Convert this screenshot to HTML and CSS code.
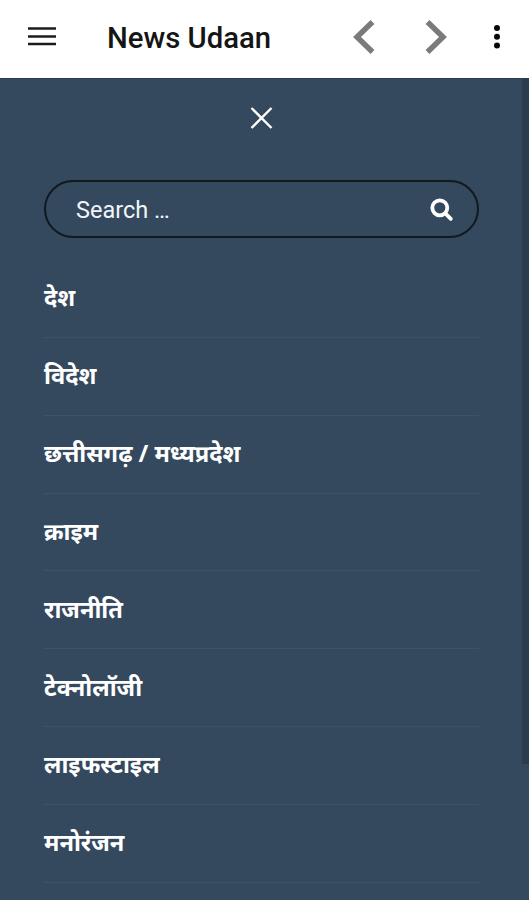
FILE: index.html
```html
<!DOCTYPE html>
<html lang="hi">
<head>
<meta charset="utf-8">
<title>News Udaan</title>
<link rel="stylesheet" href="styles.css">
</head>
<body>
<header class="bar">
  <svg class="burger" width="28" height="20" viewBox="0 0 28 20"><path d="M0 1.500h28M0 9.500h28M0 17h28"/></svg>
  <h1 class="title">News Udaan</h1>
  <svg class="chev back" width="22" height="34" viewBox="0 0 22 34"><path d="M19.500 2L4 17l15.500 15"/></svg>
  <svg class="chev next" width="22" height="34" viewBox="0 0 22 34"><path d="M2.500 2L18 17 2.500 32"/></svg>
  <svg class="dots" width="6" height="24" viewBox="0 0 6 24"><circle cx="3" cy="3" r="3"/><circle cx="3" cy="11.800" r="3"/><circle cx="3" cy="20.500" r="3"/></svg>
</header>
<main class="drawer">
  <div class="panel">
    <svg class="close" width="24" height="24" viewBox="0 0 24 24"><path d="M1.500 2l20 20M21.500 2l-20 20"/></svg>
    <div class="search">
      <span>Search …</span>
      <svg class="lens" width="24" height="24" viewBox="0 0 24 24"><circle cx="9.800" cy="9.800" r="7.500"/><path d="M15.300 15.300l5.500 5.500" stroke-linecap="round"/></svg>
    </div>
    <nav class="menu">
      <a>देश</a>
      <a>विदेश</a>
      <a>छत्तीसगढ़ / मध्यप्रदेश</a>
      <a>क्राइम</a>
      <a>राजनीति</a>
      <a>टेक्नोलॉजी</a>
      <a>लाइफस्टाइल</a>
      <a>मनोरंजन</a>
    </nav>
  </div>
  <div class="track"><div class="thumb"></div></div>
</main>
</body>
</html>
```
FILE: styles.css
```css
* { box-sizing: border-box; }
body { margin: 0; height: 900px; overflow: hidden; background: #34495e; font-family: Roboto, "Noto Sans", sans-serif; }
svg { display: block; flex: none; fill: none; }
.bar { height: 78px; padding: 0 29px 4px 28px; display: flex; align-items: center; background: #fff; }
.burger { stroke: #1c1c1c; stroke-width: 2.5; }
.title { margin: 2px 0 0 51px; width: 246px; font-size: 29.300px; line-height: 34px; font-weight: 500; color: #151515; white-space: nowrap; }
.chev { stroke: #7b7b7b; stroke-width: 5.5; }
.next { margin-left: 50px; }
.dots { margin-left: auto; fill: #080808; }
.drawer { display: flex; height: 822px; background: #34495e; border-top: 1px solid #293d50; }
.panel { flex: 1; padding: 27px 43px 0 44px; }
.close { margin: 0 auto; stroke: #fff; stroke-width: 2.4; }
.search { height: 58px; margin-top: 50px; padding: 1px 23px 0 30px; display: flex; align-items: center; justify-content: space-between; border: 2px solid #121921; border-radius: 29px; color: #f1f5f9; font-size: 23.500px; }
.lens { stroke: #fff; stroke-width: 3.8; }
.menu { margin-top: 22px; }
.menu a { display: flex; align-items: center; height: 77.850px; padding-bottom: 2px; border-bottom: 1px solid #3d5167; color: #fff; font: 700 23.600px/30px "Noto Sans", sans-serif; white-space: nowrap; }
.track { width: 7px; }
.thumb { height: 685px; background: #2b3c4e; }
```
